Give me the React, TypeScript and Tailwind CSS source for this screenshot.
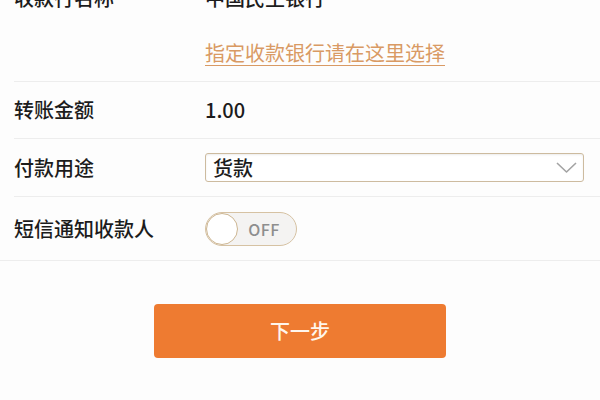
import { useState } from 'react'

const font = { fontFamily: '"Noto Sans CJK SC", "Noto Sans", sans-serif' }

function Chevron() {
  return (
    <svg width="21" height="11" viewBox="0 0 21 11" fill="none" className="shrink-0">
      <polyline points="1,1 10.5,10 20,1" stroke="#a3a3a3" strokeWidth="1.6" strokeLinejoin="round" />
    </svg>
  )
}

function Toggle({ on, onChange }: { on: boolean; onChange: (v: boolean) => void }) {
  return (
    <button
      onClick={() => onChange(!on)}
      className="flex items-center w-[92px] h-[34px] rounded-full border-[1.5px] border-[#d6c2a3] bg-[#f4f3f2] p-0"
    >
      <span className="w-[32px] h-[32px] rounded-full bg-white border-[1.5px] border-[#cdb692] shrink-0" />
      <span className="flex-1 text-center pr-[6px] text-[16px] font-medium text-[#8e8e8e] tracking-[0.5px]">
        {on ? 'ON' : 'OFF'}
      </span>
    </button>
  )
}

export default function App() {
  const [notify, setNotify] = useState(false)

  return (
    <div className="h-[400px] overflow-hidden bg-[#fdfdfd] text-[20px] font-medium text-[#1c1c1c]" style={font}>
      {/* 收款行 */}
      <div className="-mt-[16px] ml-[14px] pb-[14px] border-b border-[#ededed]">
        <div className="flex items-center h-7">
          <span className="w-[191px] shrink-0">收款行名称</span>
          <span>中国民生银行</span>
        </div>
        <div className="flex items-center h-7 mt-[27px] pl-[191px]">
          <a className="font-normal text-[#d99a64] underline underline-offset-[4px] decoration-[1px]">
            指定收款银行请在这里选择
          </a>
        </div>
      </div>

      <div className="flex items-center h-[57px] ml-[14px] border-b border-[#ededed]">
        <span className="w-[191px] shrink-0">转账金额</span>
        <span>1.00</span>
      </div>

      <div className="flex items-center h-[58px] ml-[14px] border-b border-[#ededed]">
        <span className="w-[191px] shrink-0">付款用途</span>
        <div className="flex items-center justify-between w-[379px] h-[29px] border-[1.5px] border-[#cdbb9f] rounded-[3px] bg-white pl-[7px] pr-[6px] shadow-[inset_0_1px_2px_rgba(0,0,0,0.08)]">
          <span className="leading-none">货款</span>
          <Chevron />
        </div>
      </div>

      <div className="flex items-center h-[64px] pl-[14px] border-b border-[#ededed]">
        <span className="w-[191px] shrink-0">短信通知收款人</span>
        <Toggle on={notify} onChange={setNotify} />
      </div>

      <div className="flex justify-center mt-[43px]">
        <button className="w-[292px] h-[54px] rounded-[4px] bg-[#ee7b31] text-[#fff6ec] text-[20px] font-medium">
          下一步
        </button>
      </div>
    </div>
  )
}
